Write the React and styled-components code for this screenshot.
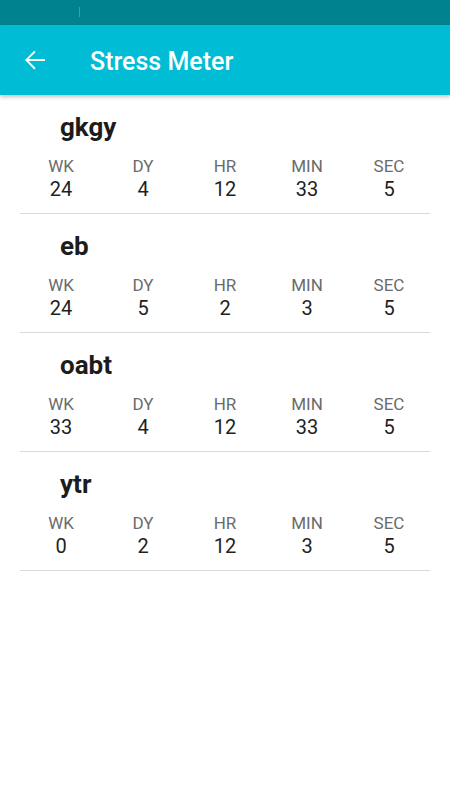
import styled, { createGlobalStyle } from "styled-components";

const GlobalStyle = createGlobalStyle`
  body {
    margin: 0;
    background: #ffffff;
    font-family: Roboto, "Noto Sans", sans-serif;
  }
`;

const Screen = styled.div`
  width: 450px;
  min-height: 800px;
  background: #ffffff;
`;

const StatusBar = styled.div`
  display: flex;
  align-items: center;
  height: 25px;
  padding-left: 79px;
  background: #00838f;
  box-sizing: border-box;
`;

const StatusTick = styled.span`
  width: 1px;
  height: 10px;
  margin-top: -1px;
  background: #4f9d82;
`;

const AppBar = styled.header`
  position: relative;
  z-index: 1;
  display: flex;
  align-items: center;
  height: 70px;
  padding-left: 20px;
  background: #00bcd4;
  box-shadow: 0 2px 4px rgba(0, 0, 0, 0.24);
`;

const BackButton = styled.button`
  display: flex;
  align-items: center;
  justify-content: center;
  width: 30px;
  height: 30px;
  padding: 0;
  border: none;
  background: none;
  color: #ffffff;
`;

const Title = styled.h1`
  margin: 2px 0 0 40px;
  font-size: 25px;
  font-weight: 500;
  color: #ffffff;
`;

const List = styled.main`
  padding: 0 20px;
`;

const Row = styled.section`
  padding: 17px 0 12px;
  border-bottom: 1px solid #dadada;
`;

const Name = styled.div`
  padding-left: 40px;
  font-size: 26px;
  line-height: 30px;
  font-weight: 700;
  color: #1c1c1c;
`;

const Units = styled.div`
  display: grid;
  grid-template-columns: repeat(5, 1fr);
  margin-top: 14px;
  text-align: center;
`;

const Unit = styled.div`
  display: flex;
  flex-direction: column;
`;

const Label = styled.span`
  font-size: 17px;
  line-height: 20px;
  color: #6b6b6b;
`;

const Value = styled.span`
  margin-top: 1px;
  font-size: 20px;
  line-height: 24px;
  color: #1f1f1f;
`;

const ArrowBack = () => (
  <svg width="30" height="30" viewBox="0 0 24 24" fill="currentColor">
    <path d="M20 11.2H6.9l5.6-5.6L11.4 4.5 4 12l7.4 7.5 1.1-1.1-5.6-5.6H20v-1.6z" />
  </svg>
);

const labels = ["WK", "DY", "HR", "MIN", "SEC"];

const timers = [
  { name: "gkgy", values: [24, 4, 12, 33, 5] },
  { name: "eb", values: [24, 5, 2, 3, 5] },
  { name: "oabt", values: [33, 4, 12, 33, 5] },
  { name: "ytr", values: [0, 2, 12, 3, 5] },
];

const App = () => {
  return (
    <>
      <GlobalStyle />
      <Screen>
        <StatusBar>
          <StatusTick />
        </StatusBar>
        <AppBar>
          <BackButton aria-label="back">
            <ArrowBack />
          </BackButton>
          <Title>Stress Meter</Title>
        </AppBar>
        <List>
          {timers.map((t) => (
            <Row key={t.name}>
              <Name>{t.name}</Name>
              <Units>
                {labels.map((label, i) => (
                  <Unit key={label}>
                    <Label>{label}</Label>
                    <Value>{t.values[i]}</Value>
                  </Unit>
                ))}
              </Units>
            </Row>
          ))}
        </List>
      </Screen>
    </>
  );
};

export default App;
